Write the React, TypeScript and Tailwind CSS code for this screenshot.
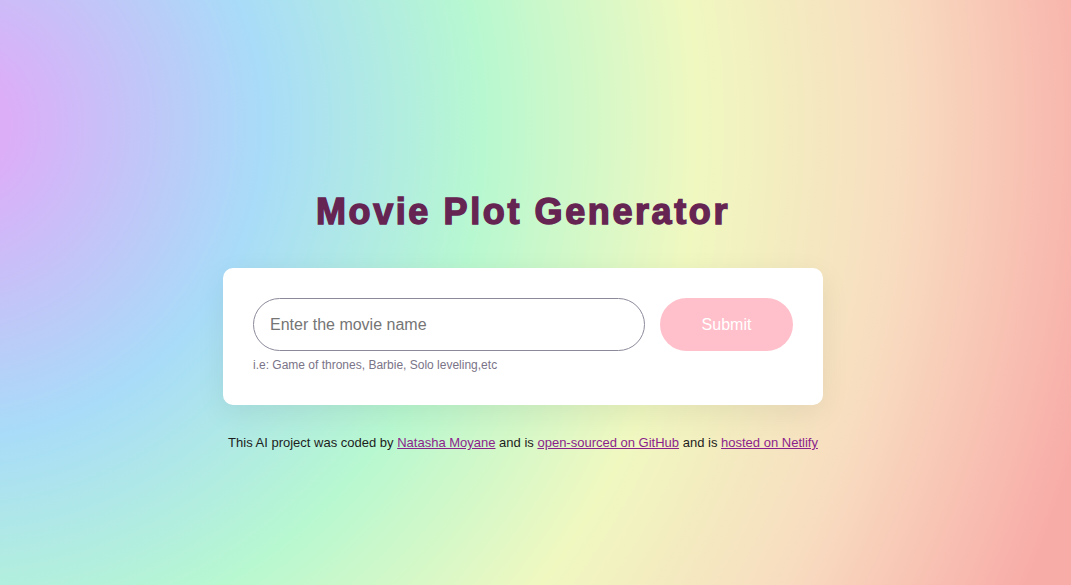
export default function App() {
  return (
    <div
      className="min-h-screen w-full flex flex-col items-center pt-[190px] pr-[25px] bg-[radial-gradient(circle_at_-50px_125px,#dcaef8_0px,#dcaef8_60px,#a8dcf8_315px,#b8f8d0_535px,#f0f8c0_748px,#f8dcc0_955px,#f8aca8_1170px)]"
      style={{ fontFamily: '"Liberation Sans", Arial, sans-serif' }}
    >
      <h1 className="text-[36px] leading-[44px] font-bold tracking-[2.6px] text-[#652452] [-webkit-text-stroke:1.4px_#652452]">
        Movie Plot Generator
      </h1>

      <div className="mt-[34px] w-[600px] bg-white rounded-[10px] px-[30px] pt-[30px] pb-[32px] shadow-[0_8px_30px_rgba(0,0,0,0.07)]">
        <form
          className="flex gap-[15px]"
          onSubmit={(e) => e.preventDefault()}
        >
          <input
            type="text"
            placeholder="Enter the movie name"
            className="w-[392px] h-[53px] rounded-full border border-[#8c8a9a] px-[16px] text-[16px] text-[#333] placeholder:text-[#757575] outline-none"
          />
          <button
            type="submit"
            className="w-[133px] h-[53px] rounded-full bg-[#ffc0cb] text-white text-[16px]"
          >
            Submit
          </button>
        </form>
        <p className="mt-[6px] text-[12px] leading-[16px] text-[#7a7488]">
          i.e: Game of thrones, Barbie, Solo leveling,etc
        </p>
      </div>

      <p className="mt-[28px] text-[13px] text-[#1d1d1d]">
        This AI project was coded by{" "}
        <a href="#" className="underline text-[#8b1f8b]">
          Natasha Moyane
        </a>{" "}
        and is{" "}
        <a href="#" className="underline text-[#8b1f8b]">
          open-sourced on GitHub
        </a>{" "}
        and is{" "}
        <a href="#" className="underline text-[#8b1f8b]">
          hosted on Netlify
        </a>
      </p>
    </div>
  );
}
